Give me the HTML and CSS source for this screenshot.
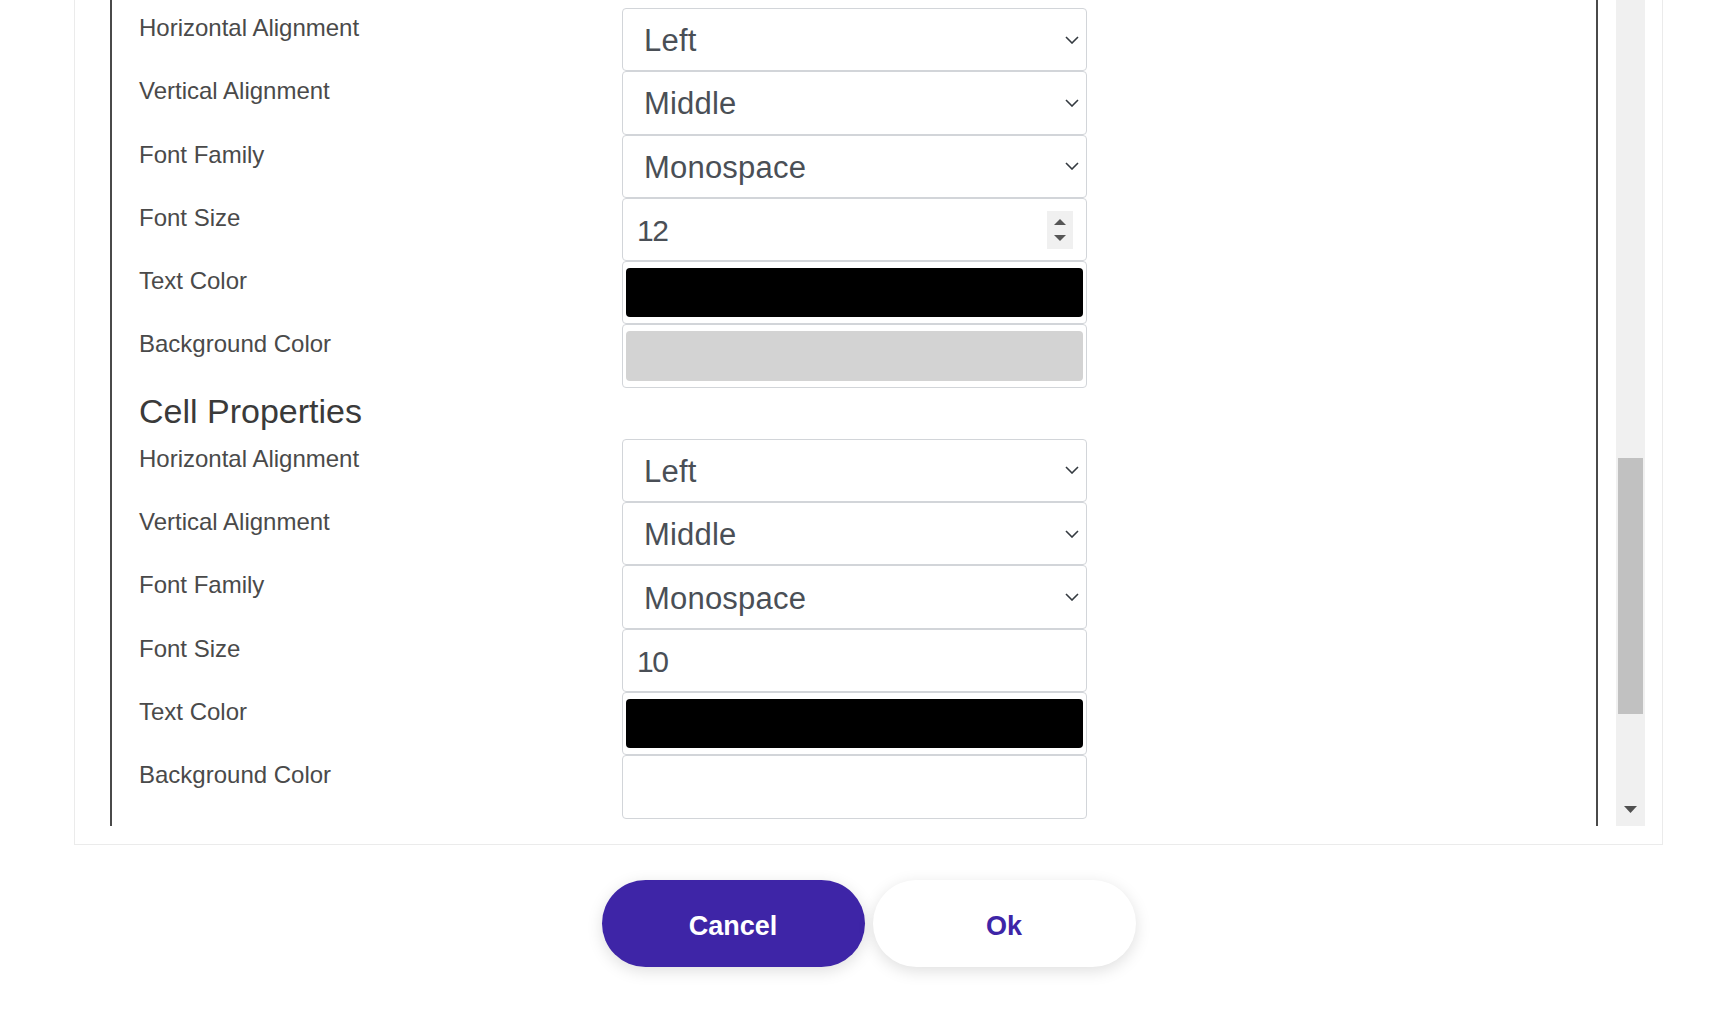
FILE: index.html
```html
<!DOCTYPE html>
<html lang="en">
<head>
<meta charset="utf-8">
<title>Table Properties</title>
<link rel="stylesheet" href="styles.css">
</head>
<body>
<div class="card">
  <div class="scroll">
    <div class="viewport">
      <div class="content">
        <div class="row">
          <div class="label">Horizontal Alignment</div>
          <div class="field select"><span class="value">Left</span><svg class="chev" width="14" height="8" viewBox="0 0 14 8"><path d="M1 1 L7 7 L13 1" fill="none" stroke="#343a40" stroke-width="1.6"/></svg></div>
        </div>
        <div class="row">
          <div class="label">Vertical Alignment</div>
          <div class="field select"><span class="value">Middle</span><svg class="chev" width="14" height="8" viewBox="0 0 14 8"><path d="M1 1 L7 7 L13 1" fill="none" stroke="#343a40" stroke-width="1.6"/></svg></div>
        </div>
        <div class="row">
          <div class="label">Font Family</div>
          <div class="field select"><span class="value">Monospace</span><svg class="chev" width="14" height="8" viewBox="0 0 14 8"><path d="M1 1 L7 7 L13 1" fill="none" stroke="#343a40" stroke-width="1.6"/></svg></div>
        </div>
        <div class="row">
          <div class="label">Font Size</div>
          <div class="field number"><span class="num">12</span>
            <div class="spinner">
              <svg width="12" height="6" viewBox="0 0 12 6"><path d="M0 6 L6 0 L12 6 Z" fill="#555"/></svg>
              <svg width="12" height="6" viewBox="0 0 12 6"><path d="M0 0 L12 0 L6 6 Z" fill="#555"/></svg>
            </div>
          </div>
        </div>
        <div class="row">
          <div class="label">Text Color</div>
          <div class="field color"><div class="swatch swatch-black"></div></div>
        </div>
        <div class="row">
          <div class="label">Background Color</div>
          <div class="field color"><div class="swatch swatch-gray"></div></div>
        </div>

        <h2 class="section-title">Cell Properties</h2>

        <div class="row">
          <div class="label">Horizontal Alignment</div>
          <div class="field select"><span class="value">Left</span><svg class="chev" width="14" height="8" viewBox="0 0 14 8"><path d="M1 1 L7 7 L13 1" fill="none" stroke="#343a40" stroke-width="1.6"/></svg></div>
        </div>
        <div class="row">
          <div class="label">Vertical Alignment</div>
          <div class="field select"><span class="value">Middle</span><svg class="chev" width="14" height="8" viewBox="0 0 14 8"><path d="M1 1 L7 7 L13 1" fill="none" stroke="#343a40" stroke-width="1.6"/></svg></div>
        </div>
        <div class="row">
          <div class="label">Font Family</div>
          <div class="field select"><span class="value">Monospace</span><svg class="chev" width="14" height="8" viewBox="0 0 14 8"><path d="M1 1 L7 7 L13 1" fill="none" stroke="#343a40" stroke-width="1.6"/></svg></div>
        </div>
        <div class="row">
          <div class="label">Font Size</div>
          <div class="field number"><span class="num">10</span></div>
        </div>
        <div class="row">
          <div class="label">Text Color</div>
          <div class="field color"><div class="swatch swatch-black"></div></div>
        </div>
        <div class="row">
          <div class="label">Background Color</div>
          <div class="field color"><div class="swatch swatch-white"></div></div>
        </div>
      </div>
    </div>
    <div class="scrollbar">
      <div class="thumb"></div>
      <svg class="sb-arrow" width="13" height="7" viewBox="0 0 13 7"><path d="M0 0 L13 0 L6.5 7 Z" fill="#505050"/></svg>
    </div>
  </div>
</div>
<div class="actions">
  <button class="btn btn-primary">Cancel</button>
  <button class="btn btn-light">Ok</button>
</div>
</body>
</html>
```

FILE: styles.css
```css
html, body {
  margin: 0;
  padding: 0;
  background: #ffffff;
}

body {
  font-family: "Liberation Sans", Arial, sans-serif;
  padding-bottom: 60px;
}

.card {
  box-sizing: border-box;
  width: 1589px;
  margin: -20px 0 0 74px;
  border: 1px solid #ebebeb;
  padding: 17px 17px 18px 16px;
  background: #fff;
}

.scroll {
  display: flex;
  height: 828px;
}

.viewport {
  flex: 1;
  overflow: hidden;
}

.content {
  margin: 0 18px 0 19px;
  border-left: 2px solid #4a4a4a;
  border-right: 2px solid #4a4a4a;
  padding: 10px 0 80px 27px;
}

.row {
  display: grid;
  grid-template-columns: 483px 465px;
  height: 63.3px;
}

.label {
  padding-top: 6px;
  font-size: 24px;
  color: #4a4a4a;
}

.section-title {
  margin: 4px 0 8px 0;
  font-size: 34px;
  line-height: 39px;
  font-weight: 400;
  color: #3a3a3a;
}

.field {
  box-sizing: border-box;
  height: 100%;
  border: 1px solid #d2d5d9;
  border-radius: 4px;
  display: flex;
  align-items: center;
  background: #fff;
}

.select {
  justify-content: space-between;
  padding: 3px 7px 0 21px;
}

.select .value {
  font-size: 31px;
  color: #4a4f56;
  letter-spacing: 0.2px;
}

.chev {
  margin-top: -3px;
}

.number {
  justify-content: space-between;
  padding: 3px 13px 0 14px;
}

.num {
  font-size: 30px;
  letter-spacing: -1.5px;
  color: #4a4f56;
}

.spinner {
  width: 26px;
  height: 38px;
  margin-top: -3px;
  background: #f0f0f0;
  display: flex;
  flex-direction: column;
  align-items: center;
  justify-content: center;
  gap: 10px;
}

.color {
  padding: 6px 3px;
}

.swatch {
  flex: 1;
  height: 100%;
  border-radius: 4px;
}

.swatch-black { background: #000; }
.swatch-gray { background: #d3d3d3; }
.swatch-white { background: #fff; }

.scrollbar {
  width: 29px;
  background: #f0f0f0;
  display: flex;
  flex-direction: column;
  align-items: center;
}

.thumb {
  width: 25px;
  height: 256px;
  margin-top: 460px;
  background: #c1c1c1;
}

.sb-arrow {
  margin-top: auto;
  margin-bottom: 13px;
}

.actions {
  width: 1589px;
  margin: 35px 0 0 74px;
  display: flex;
  justify-content: center;
  gap: 8px;
}

.btn {
  width: 263px;
  height: 87px;
  padding: 5px 0 0 0;
  border: none;
  border-radius: 44px;
  font-family: "Liberation Sans", Arial, sans-serif;
  font-size: 27px;
  font-weight: 700;
  cursor: pointer;
  box-shadow: 0 4px 16px rgba(0, 0, 0, 0.13);
}

.btn-primary {
  background: #3e25a7;
  color: #ffffff;
}

.btn-light {
  background: #ffffff;
  color: #3e25a7;
}
```
